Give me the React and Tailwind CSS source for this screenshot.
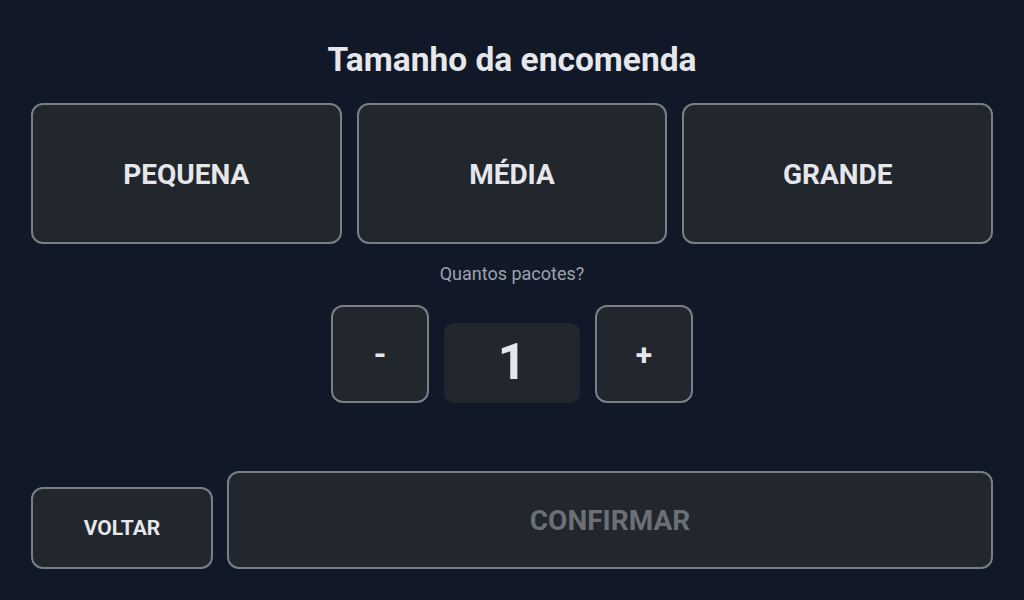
import React from "react";

const FONT = { fontFamily: "Roboto, 'Noto Sans', sans-serif" };

const SIZES = ["PEQUENA", "MÉDIA", "GRANDE"];

export default function App() {
    const [size, setSize] = React.useState(null);
    const [count, setCount] = React.useState(1);

    return (
        <div
            className="w-[1024px] h-[600px] bg-[#111827] text-[#e5e7eb] flex flex-col px-[31px] pt-[39px] pb-[31px]"
            style={FONT}
        >
            <h1 className="text-[33.5px] leading-[42px] font-bold text-center">
                Tamanho da encomenda
            </h1>

            <div className="mt-[22px] grid grid-cols-3 gap-[15px]">
                {SIZES.map((s) => (
                    <button
                        key={s}
                        type="button"
                        onClick={() => setSize(s)}
                        className="h-[141px] pt-[2px] rounded-[12px] border-2 border-[#7a7f87] bg-[#22262d] text-[28px] font-bold"
                    >
                        {s}
                    </button>
                ))}
            </div>

            <p className="mt-[18px] text-[18px] leading-[24px] text-center text-[#9ca3af]">
                Quantos pacotes?
            </p>

            <div className="mt-[19px] flex items-center justify-center gap-[15px]">
                <button
                    type="button"
                    onClick={() => setCount((c) => Math.max(1, c - 1))}
                    className="w-[98px] h-[98px] rounded-[12px] border-2 border-[#7a7f87] bg-[#22262d] text-[32px] font-bold"
                >
                    -
                </button>
                <div className="w-[136px] h-[80px] mt-[17px] rounded-[10px] bg-[#22262d] flex items-center justify-center text-[50px] font-bold">
                    {count}
                </div>
                <button
                    type="button"
                    onClick={() => setCount((c) => c + 1)}
                    className="w-[98px] h-[98px] rounded-[12px] border-2 border-[#7a7f87] bg-[#22262d] text-[30px] font-bold"
                >
                    +
                </button>
            </div>

            <div className="flex-1" />

            <div className="flex items-end gap-[14px]">
                <button
                    type="button"
                    className="w-[182px] h-[82px] pt-[2px] rounded-[12px] border-2 border-[#7a7f87] bg-[#22262d] text-[21px] font-bold"
                >
                    VOLTAR
                </button>
                <button
                    type="button"
                    disabled={!size}
                    className="flex-1 h-[98px] pt-[2px] rounded-[12px] border-2 border-[#7a7f87] bg-[#22262d] text-[28px] font-bold text-[#6b6f76]"
                >
                    CONFIRMAR
                </button>
            </div>
        </div>
    );
}
